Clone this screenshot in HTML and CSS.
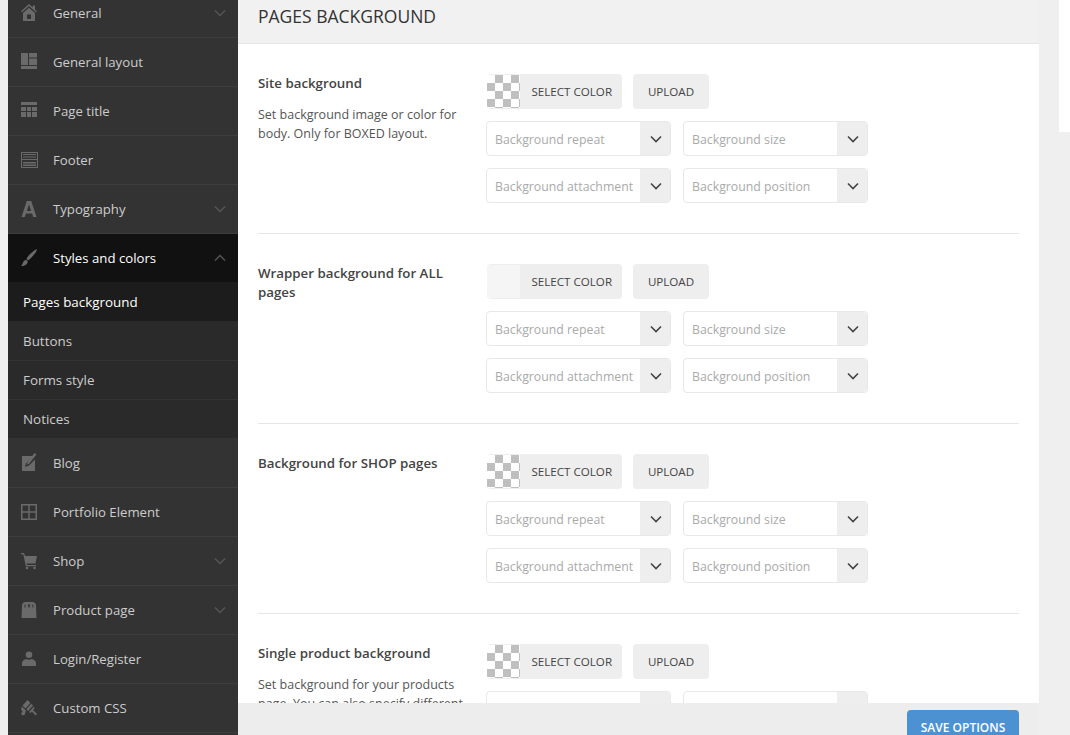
FILE: index.html
```html
<!DOCTYPE html>
<html lang="en">
<head>
<meta charset="utf-8">
<title>Pages background</title>
<link rel="stylesheet" href="styles.css">
</head>
<body>
<div class="corner"></div>
<div class="page">
  <nav class="sidebar">
    <a class="item first"><svg class="ico" viewBox="0 0 16 16"><path fill-rule="evenodd" d="M8-1l3.800 3.400V.5h2.200v3.900L16 6.200l-.9 1L8 1 .9 7.200 0 6.200zM2 8l6-5.200L14 8v8H2zM6 9.500v4.500h4V9.500z"/></svg><span>General</span><svg class="chev" viewBox="0 0 12 8"><path d="M1 1.500l5 5 5-5"/></svg></a>
    <a class="item"><svg class="ico up" viewBox="0 0 16 16"><path d="M0 0h7v12H0zM8 0h8v4.500H8zM8 5.500h8V12H8zM0 13h16v3H0z"/></svg><span>General layout</span></a>
    <a class="item"><svg class="ico up" viewBox="0 0 16 16"><path d="M0 0h16v3H0zM0 5h5v4H0zM6 5h4v4H6zM11 5h5v4h-5zM0 10h5v5H0zM6 10h4v5H6zM11 10h5v5h-5z"/></svg><span>Page title</span></a>
    <a class="item"><svg class="ico wide" viewBox="0 0 17 16"><path fill-rule="evenodd" d="M0 0h17v16H0zM1 1v6h15V1zM1 8v7h15V8z"/><path d="M2 2h13v1H2zM2 4.500h13v1H2zM2 10h13v1.500H2zM2 12.500h13V14H2z"/></svg><span>Footer</span></a>
    <a class="item"><svg class="ico" viewBox="0 0 16 16"><path fill-rule="evenodd" d="M5.800 0h4.400L15.500 16h-3.300l-1.100-3.400H4.900L3.800 16H.5zM8 3.500L5.800 10h4.400z"/></svg><span>Typography</span><svg class="chev" viewBox="0 0 12 8"><path d="M1 1.500l5 5 5-5"/></svg></a>
    <a class="item open"><svg class="ico" viewBox="0 0 16 16"><path d="M16-1C16 2 10.500 8 7 10.500L5.500 9C7 5.500 13 0 16-1zM5 9.800l1.800 1.700C6.500 14.500 3 16.500 0 16c1.500-1 1.500-3 2.500-4.500.6-.8 1.500-1.400 2.500-1.700z"/></svg><span>Styles and colors</span><svg class="chev" viewBox="0 0 12 8"><path d="M1 6.500l5-5 5 5"/></svg></a>
    <div class="sub">
      <a class="sub-item active">Pages background</a>
      <a class="sub-item">Buttons</a>
      <a class="sub-item">Forms style</a>
      <a class="sub-item">Notices</a>
    </div>
    <a class="item tall"><svg class="ico" viewBox="0 0 16 16"><path d="M1 1h10.500L5 8.500l-1 3.500 4-1.500L14 4.500V16H1zM13.500-2L15.500-.5 8 8.800l-2.200 1L6.500 7.300z"/></svg><span>Blog</span></a>
    <a class="item"><svg class="ico" viewBox="0 0 16 16"><path fill-rule="evenodd" d="M0 0h16v16H0zM1.500 1.500v5.800h5.800V1.500zM8.700 1.500v5.800h5.800V1.500zM1.500 8.700v5.800h5.800V8.700zM8.700 8.700v5.800h5.800V8.700z"/></svg><span>Portfolio Element</span></a>
    <a class="item"><svg class="ico" viewBox="0 0 16 16"><path d="M0 0h3l1 3h12l-1.500 7.500H5.500l.4 1.500H15v1.300H4.800L2.300 1.300H0z"/><circle cx="6" cy="15" r="1.300"/><circle cx="13.500" cy="15" r="1.300"/></svg><span>Shop</span><svg class="chev" viewBox="0 0 12 8"><path d="M1 1.500l5 5 5-5"/></svg></a>
    <a class="item"><svg class="ico" viewBox="0 0 16 16"><path fill-rule="evenodd" d="M4.500 0h7c2 0 3.300 1.300 3.500 3.500L15.500 16H.5L1 3.500C1.200 1.300 2.500 0 4.500 0zM4.300 2.500C3.700 2.800 3.500 3.500 3.500 5.500h1c0-1.500 0-2 .5-2.500zM7 2.300V5.500h.8V3h.5v2.500h.8V2.300zM11 3c.5.500.5 1 .5 2.500h1c0-2-.2-2.700-.8-3z"/></svg><span>Product page</span><svg class="chev" viewBox="0 0 12 8"><path d="M1 1.500l5 5 5-5"/></svg></a>
    <a class="item"><svg class="ico" viewBox="0 0 16 16"><circle cx="8" cy="3.800" r="3.300"/><path d="M1 15v-2.500C1 9.500 3.500 8.500 5.500 8c1.500 1 3.500 1 5 0 2 .5 4.500 1.500 4.500 4.500V15z"/></svg><span>Login/Register</span></a>
    <a class="item"><svg class="ico" viewBox="0 0 16 16"><path d="M6.500 0l3 3-5 5.500-3-3zM10.300 3.800l1.800 1.800-5 5.500-1.800-1.800zM13 6.500l-5 5.400 1.500 1.200L11 11.500l3.500 4 1.500-1.500-4-4 1.500-1.500zM1 6.500L5 10.800 3.300 15.500 0 14.500l1.500-3.500L0 9.500z"/></svg><span>Custom CSS</span></a>
  </nav>

  <main class="panel">
    <header class="panel-head"><h1>PAGES BACKGROUND</h1></header>
    <div class="panel-body">
      <section class="opt">
        <div class="opt-info">
          <h2>Site background</h2>
          <p>Set background image or color for body. Only for BOXED layout.</p>
        </div>
        <div class="opt-ctl">
          <div class="btn-row">
            <button class="btn color"><i class="swatch"></i><b>SELECT COLOR</b></button>
            <button class="btn upload">UPLOAD</button>
          </div>
          <div class="selects">
            <div class="sel"><span>Background repeat</span><i><svg viewBox="0 0 12 8"><path d="M1 1.500l5 5 5-5"/></svg></i></div>
            <div class="sel"><span>Background size</span><i><svg viewBox="0 0 12 8"><path d="M1 1.500l5 5 5-5"/></svg></i></div>
            <div class="sel"><span>Background attachment</span><i><svg viewBox="0 0 12 8"><path d="M1 1.500l5 5 5-5"/></svg></i></div>
            <div class="sel"><span>Background position</span><i><svg viewBox="0 0 12 8"><path d="M1 1.500l5 5 5-5"/></svg></i></div>
          </div>
        </div>
      </section>
      <section class="opt">
        <div class="opt-info">
          <h2>Wrapper background for ALL pages</h2>
        </div>
        <div class="opt-ctl">
          <div class="btn-row">
            <button class="btn color"><i class="swatch plain"></i><b>SELECT COLOR</b></button>
            <button class="btn upload">UPLOAD</button>
          </div>
          <div class="selects">
            <div class="sel"><span>Background repeat</span><i><svg viewBox="0 0 12 8"><path d="M1 1.500l5 5 5-5"/></svg></i></div>
            <div class="sel"><span>Background size</span><i><svg viewBox="0 0 12 8"><path d="M1 1.500l5 5 5-5"/></svg></i></div>
            <div class="sel"><span>Background attachment</span><i><svg viewBox="0 0 12 8"><path d="M1 1.500l5 5 5-5"/></svg></i></div>
            <div class="sel"><span>Background position</span><i><svg viewBox="0 0 12 8"><path d="M1 1.500l5 5 5-5"/></svg></i></div>
          </div>
        </div>
      </section>
      <section class="opt">
        <div class="opt-info">
          <h2>Background for SHOP pages</h2>
        </div>
        <div class="opt-ctl">
          <div class="btn-row">
            <button class="btn color"><i class="swatch"></i><b>SELECT COLOR</b></button>
            <button class="btn upload">UPLOAD</button>
          </div>
          <div class="selects">
            <div class="sel"><span>Background repeat</span><i><svg viewBox="0 0 12 8"><path d="M1 1.500l5 5 5-5"/></svg></i></div>
            <div class="sel"><span>Background size</span><i><svg viewBox="0 0 12 8"><path d="M1 1.500l5 5 5-5"/></svg></i></div>
            <div class="sel"><span>Background attachment</span><i><svg viewBox="0 0 12 8"><path d="M1 1.500l5 5 5-5"/></svg></i></div>
            <div class="sel"><span>Background position</span><i><svg viewBox="0 0 12 8"><path d="M1 1.500l5 5 5-5"/></svg></i></div>
          </div>
        </div>
      </section>
      <section class="opt">
        <div class="opt-info">
          <h2>Single product background</h2>
          <p>Set background for your products page. You can also specify different background for a particular product while editing it.</p>
        </div>
        <div class="opt-ctl">
          <div class="btn-row">
            <button class="btn color"><i class="swatch"></i><b>SELECT COLOR</b></button>
            <button class="btn upload">UPLOAD</button>
          </div>
          <div class="selects">
            <div class="sel"><span>Background repeat</span><i><svg viewBox="0 0 12 8"><path d="M1 1.500l5 5 5-5"/></svg></i></div>
            <div class="sel"><span>Background size</span><i><svg viewBox="0 0 12 8"><path d="M1 1.500l5 5 5-5"/></svg></i></div>
          </div>
        </div>
      </section>
    </div>
    <footer class="panel-foot"><button class="save">SAVE OPTIONS</button></footer>
  </main>
</div>
</body>
</html>
```
FILE: styles.css
```css
* { box-sizing: border-box; }
html, body { margin: 0; height: 735px; overflow: hidden; }
body {
  background: #efefef;
  font-family: "Open Sans", "Liberation Sans", sans-serif;
  font-size: 13px;
  color: #555;
  position: relative;
}
.corner {
  position: absolute;
  top: 0;
  right: 0;
  width: 11px;
  height: 132px;
  background: #fff;
}
.page {
  display: flex;
  height: 735px;
  width: 1031px;
  margin-left: 8px;
}
.sidebar {
  width: 230px;
  flex: none;
  background: #333;
  height: 735px;
  overflow: hidden;
}
.item {
  display: flex;
  align-items: center;
  height: 49px;
  padding: 0 12px 0 13px;
  border-bottom: 1px solid #3d3d3d;
  color: #ccc;
  font-size: 13.2px;
  line-height: 18px;
}
.item.first { margin-top: -11px; }
.item.tall { height: 50px; }
.item span { margin-left: 16px; flex: 1; }
.ico { width: 16px; height: 16px; fill: #6a6a6a; flex: none; overflow: visible; }
.ico.up { margin-top: -2px; }
.ico.wide { width: 17px; margin-right: -1px; }
.chev { width: 12px; height: 8px; fill: none; stroke: #555; stroke-width: 1.5; flex: none; }
.item.open {
  background: #111;
  border-bottom: 0;
  height: 48px;
  color: #fff;
}
.sub { background: #2a2a2a; }
.sub-item {
  display: flex;
  align-items: center;
  height: 39px;
  padding-left: 15px;
  color: #ccc;
  font-size: 13.4px;
}
.sub-item + .sub-item + .sub-item { border-top: 1px solid #333; }
.sub-item.active { background: #1c1c1c; color: #fff; }
.panel {
  flex: 1;
  display: flex;
  flex-direction: column;
  background: #fff;
  height: 735px;
  min-width: 0;
}
.panel-head {
  height: 44px;
  flex: none;
  background: #f1f1f1;
  border-bottom: 1px solid #e6e6e6;
  padding: 4px 20px 0;
}
.panel-head h1 {
  margin: 0;
  font-size: 17.5px;
  font-weight: 500;
  line-height: 24px;
  color: #333;
}
.panel-body {
  flex: 1;
  min-height: 0;
  overflow: hidden;
  padding: 0 20px;
}
.opt {
  display: flex;
  height: 190px;
  padding-top: 30px;
  border-bottom: 1px solid #e6e6e6;
}
.opt-info { width: 228px; flex: none; padding-right: 20px; }
.opt-info h2 {
  margin: 0 0 12px;
  font-size: 13.3px;
  font-weight: 600;
  line-height: 19px;
  color: #444;
}
.opt-info p { margin: 0; font-size: 12.5px; line-height: 19px; color: #555; }
.btn-row { display: flex; gap: 11px; padding-left: 1px; margin-bottom: 12px; }
.btn {
  height: 35px;
  border: 0;
  border-radius: 4px;
  background: #eee;
  color: #444;
  font: 500 11.6px/35px "Open Sans", "Liberation Sans", sans-serif;
  padding: 0;
}
.btn.color { display: flex; width: 135px; overflow: hidden; align-items: center; }
.btn.color b { font-weight: 500; margin-left: 10.5px; }
.btn.upload { width: 76px; }
.swatch {
  width: 33px;
  height: 33px;
  margin: 1px 1px 1px 0;
  background: repeating-conic-gradient(#bfbfbf 0 25%, #fff 0 50%) 0 0 / 16px 16px;
}
.swatch.plain { background: #f5f5f5; }
.selects {
  display: grid;
  grid-template-columns: 185px 185px;
  column-gap: 12px;
  row-gap: 12px;
}
.sel {
  display: flex;
  height: 35px;
  border: 1px solid #e8e8e8;
  border-radius: 4px;
  overflow: hidden;
  background: #fff;
}
.sel span {
  flex: 1;
  padding-left: 8px;
  font-size: 12.3px;
  line-height: 35px;
  color: #aaa;
  white-space: nowrap;
  overflow: hidden;
}
.sel i {
  width: 30px;
  flex: none;
  background: #eee;
  display: flex;
  align-items: center;
  justify-content: center;
  padding-left: 2px;
}
.sel svg { width: 12px; height: 8px; fill: none; stroke: #444; stroke-width: 1.600; }
.panel-foot {
  height: 32px;
  flex: none;
  background: #ededed;
  overflow: hidden;
  padding: 7px 20px 0;
  display: flex;
  justify-content: flex-end;
  align-items: flex-start;
}
.save {
  width: 112px;
  height: 38px;
  flex: none;
  border: 0;
  border-radius: 4px;
  background: #4c92d3;
  color: #fff;
  font: 600 12px/35px "Open Sans", "Liberation Sans", sans-serif;
  padding: 0 0 3px;
}
```
